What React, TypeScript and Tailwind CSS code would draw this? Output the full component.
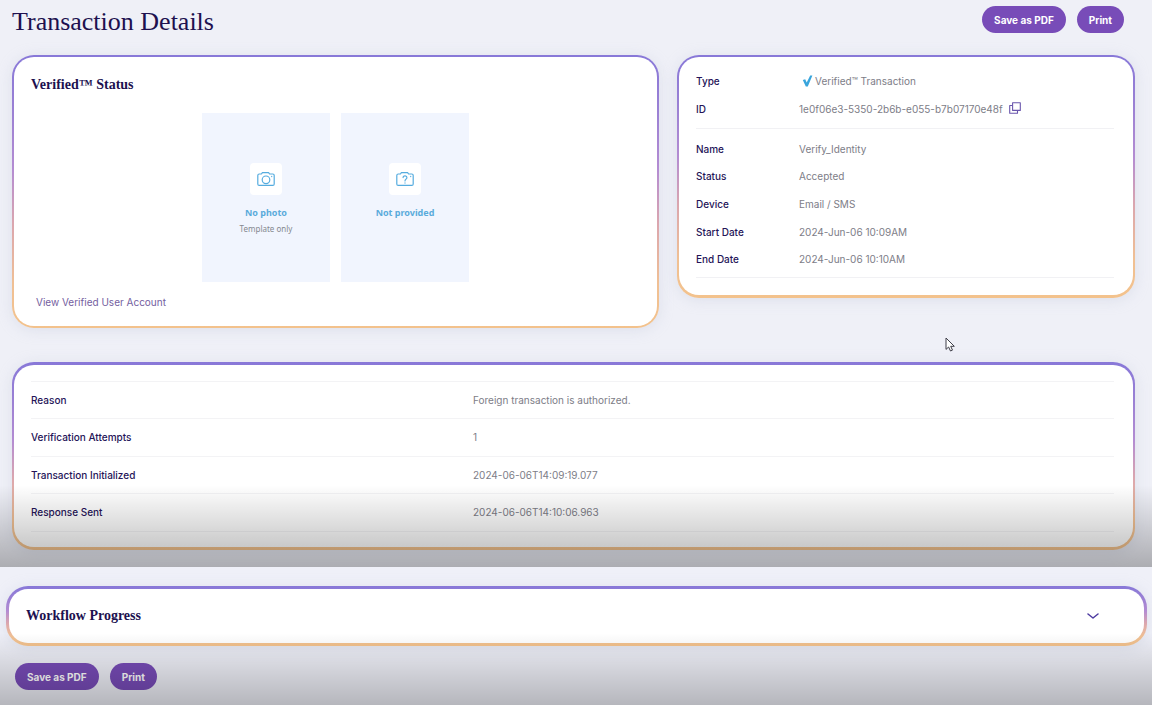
import { ReactNode } from "react";

const BORDER =
  "bg-[linear-gradient(180deg,#8878d8_0%,#9a80d4_20%,#b48cd2_42%,#dba6ae_62%,#f0c094_84%,#f3c28c_100%)]";

function Card({ children, inner }: { children: ReactNode; inner: string }) {
  return (
    <section className={`rounded-[22px] shadow-[0_2px_14px_rgba(190,195,215,0.35)] ${BORDER} ${inner}`}>
      {children}
    </section>
  );
}

function Actions() {
  const button =
    "h-[27px] rounded-full bg-[#784cb8] px-3 text-[10px] leading-4 font-bold text-white whitespace-nowrap";
  return (
    <div className="flex gap-[11px]">
      <button type="button" className={button}>Save as PDF</button>
      <button type="button" className={button}>Print</button>
    </div>
  );
}

function Camera({ question }: { question?: boolean }) {
  return (
    <svg width="18" height="16" viewBox="0 0 18 16" fill="none" stroke="#55acdf" strokeWidth="1.2" strokeLinejoin="round" strokeLinecap="round" aria-hidden="true">
      <path d="M2.2 3H4.4L5.4 1.6H11.6L12.6 3H15.8Q17.2 3 17.2 4.4V12.9Q17.2 14.4 15.8 14.4H2.2Q.8 14.4 .8 12.9V4.4Q.8 3 2.2 3Z" />
      <path d="M14.7 5.3V5.6" />
      {question ? (
        <>
          <path d="M7.1 6.6C7.1 4.2 11 4.3 10.9 6.7C10.8 8.1 9 8.2 9 9.9" />
          <path d="M9 11.9V12.1" />
        </>
      ) : (
        <circle cx="9" cy="8.8" r="3.8" />
      )}
    </svg>
  );
}

function PhotoTile({ title, note, question }: { title: string; note?: string; question?: boolean }) {
  return (
    <div className="flex h-[169px] w-32 flex-col items-center bg-[#f1f5fe] pt-[50px] text-center">
      <div className="flex size-8 items-center justify-center rounded-sm bg-white">
        <Camera question={question} />
      </div>
      <p className="mt-[10px] font-['Noto_Sans',sans-serif] text-[9px] leading-4 font-bold text-[#5aabdb]">{title}</p>
      {note && <p className="font-['Noto_Sans',sans-serif] text-[8px] leading-4 text-[#85888f]">{note}</p>}
    </div>
  );
}

function Detail({ label, children }: { label: string; children: ReactNode }) {
  return (
    <div className="flex items-center">
      <dt className="w-[103px] shrink-0 font-medium text-[#251458]">{label}</dt>
      <dd className="flex min-w-0 items-center">{children}</dd>
    </div>
  );
}

const details = [
  ["Name", "Verify_Identity"],
  ["Status", "Accepted"],
  ["Device", "Email / SMS"],
  ["Start Date", "2024-Jun-06 10:09AM"],
  ["End Date", "2024-Jun-06 10:10AM"],
];

const responses = [
  ["Reason", "Foreign transaction is authorized."],
  ["Verification Attempts", "1"],
  ["Transaction Initialized", "2024-06-06T14:09:19.077"],
  ["Response Sent", "2024-06-06T14:10:06.963"],
];

export default function App() {
  return (
    <main className="relative min-h-screen bg-white font-['Inter',sans-serif] text-[10px] leading-4 text-[#7d7d87]">
      <div className="relative bg-[#eff0f7] pt-[6px] pr-[17px] pb-[17px] pl-3">
        <header className="flex h-[49px] items-start justify-between pr-[11px]">
          <h1 className="font-['Liberation_Serif',serif] text-[26px] leading-8 text-[#20104f]">Transaction Details</h1>
          <Actions />
        </header>

        <div className="grid grid-cols-[647fr_458fr] items-start gap-[18px]">
          <Card inner="p-[2px]">
            <div className="rounded-[20px] bg-white px-[17px] pt-[18px] pb-4">
              <h2 className="font-['Liberation_Serif',serif] text-[14px] leading-5 font-bold text-[#20104f]">Verified™ Status</h2>
              <div className="mt-[18px] flex justify-center gap-[11px]">
                <PhotoTile title="No photo" note="Template only" />
                <PhotoTile title="Not provided" question />
              </div>
              <a href="#account" className="mt-3 ml-[5px] inline-block align-top text-[#7460a0]">View Verified User Account</a>
            </div>
          </Card>

          <Card inner="p-[2px] pb-[3px]">
            <dl className="rounded-[20px] bg-white pt-[10px] pr-[19px] pb-[17px] pl-[17px]">
              <div className="grid h-[62px] auto-rows-[28px] border-b border-[#f1f1f4]">
                <Detail label="Type">
                  <svg width="11" height="12" viewBox="0 0 11 12" className="mr-[2px] ml-[3px]" aria-hidden="true">
                    <path d="M.8 4.9L3.2 4.3L4.7 7.6L8.2.4H10.4L5.8 11.6H3.8Z" fill="#39a5dc" />
                  </svg>
                  Verified™ Transaction
                </Detail>
                <Detail label="ID">
                  1e0f06e3-5350-2b6b-e055-b7b07170e48f
                  <button type="button" aria-label="Copy ID" className="mb-[2px] ml-[6px] shrink-0">
                    <svg width="12" height="12" viewBox="0 0 12 12" fill="none" stroke="#6a56ad" strokeWidth="1.1" strokeLinejoin="round" aria-hidden="true">
                      <path d="M3.6.7H11.3V8.4H3.6Z" />
                      <path d="M3.4 3.5H.7V11.3H8.5V8.6" />
                    </svg>
                  </button>
                </Detail>
              </div>
              <div className="grid h-[149px] auto-rows-fr border-b border-[#f1f1f4] pt-[6px] pb-[4px]">
                {details.map(([label, value]) => (
                  <Detail key={label} label={label}>{value}</Detail>
                ))}
              </div>
            </dl>
          </Card>
        </div>

        <div className="mt-[34px]">
          <Card inner="px-[2px] py-[3px]">
            <div className="rounded-[20px] bg-white pt-4 pr-[19px] pb-[15px] pl-[17px]">
              <dl className="grid h-[151px] auto-rows-fr divide-y divide-[#f3f3f5] border-y border-[#f3f3f5]">
                {responses.map(([label, value]) => (
                  <div key={label} className="grid grid-cols-[442fr_641fr] items-center">
                    <dt className="font-medium text-[#251458]">{label}</dt>
                    <dd>{value}</dd>
                  </div>
                ))}
              </dl>
            </div>
          </Card>
        </div>
        <div className="pointer-events-none absolute inset-x-0 bottom-0 h-[82px] bg-linear-to-b from-black/0 to-black/28" />
      </div>

      <div className="relative bg-[#eff0f8] pt-[19px] pr-[5px] pb-[15px] pl-[6px]">
        <Card inner="p-[3px]">
          <button type="button" aria-expanded="false" className="flex h-[54px] w-full items-center justify-between rounded-[19px] bg-white pr-[45px] pl-[17px] text-left">
            <span className="font-['Liberation_Serif',serif] text-[14px] leading-5 font-bold text-[#20104f]">Workflow Progress</span>
            <svg width="12" height="7" viewBox="0 0 12 7" fill="none" stroke="#4d3aa0" strokeWidth="1.5" strokeLinecap="round" strokeLinejoin="round" aria-hidden="true">
              <path d="M1 1L6 5L11 1" />
            </svg>
          </button>
        </Card>
        <div className="mt-[17px] ml-[9px]">
          <Actions />
        </div>
        <div className="pointer-events-none absolute inset-x-0 bottom-0 h-[72px] bg-linear-to-b from-black/0 to-black/24" />
      </div>

      <svg width="11" height="16" viewBox="0 0 11 16" className="pointer-events-none absolute top-[337px] left-[945px]" aria-hidden="true">
        <path d="M1 1V12.4L3.6 10L5.5 14L7.5 13.1L5.7 9.3H9.3Z" fill="#fff" stroke="#3e3e48" strokeWidth="1" strokeLinejoin="round" />
      </svg>
    </main>
  );
}
